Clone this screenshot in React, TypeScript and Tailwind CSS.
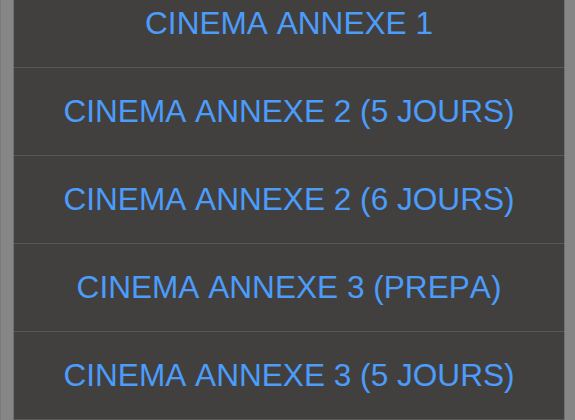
const rows = [
  "CINEMA ANNEXE 1",
  "CINEMA ANNEXE 2 (5 JOURS)",
  "CINEMA ANNEXE 2 (6 JOURS)",
  "CINEMA ANNEXE 3 (PREPA)",
  "CINEMA ANNEXE 3 (5 JOURS)",
];

export default function App() {
  return (
    <div className="h-[420px] w-[575px] overflow-hidden bg-[#868686] border-l border-[#7a7a7a]">
      <div className="ml-[12px] mr-[10px] flex h-full flex-col overflow-hidden border-x border-[#707070] bg-[#42403e]">
        <div className="-mt-[20px] flex flex-col">
          {rows.map((label) => (
            <div
              key={label}
              className="flex h-[88px] shrink-0 items-center justify-center border-b border-[#5b5957]"
            >
              <span
                className="text-[31.6px] leading-none text-[#4b9cfb] [font-kerning:none]"
                style={{ fontFamily: '"Liberation Sans", Arial, sans-serif' }}
              >
                {label}
              </span>
            </div>
          ))}
        </div>
      </div>
    </div>
  );
}
